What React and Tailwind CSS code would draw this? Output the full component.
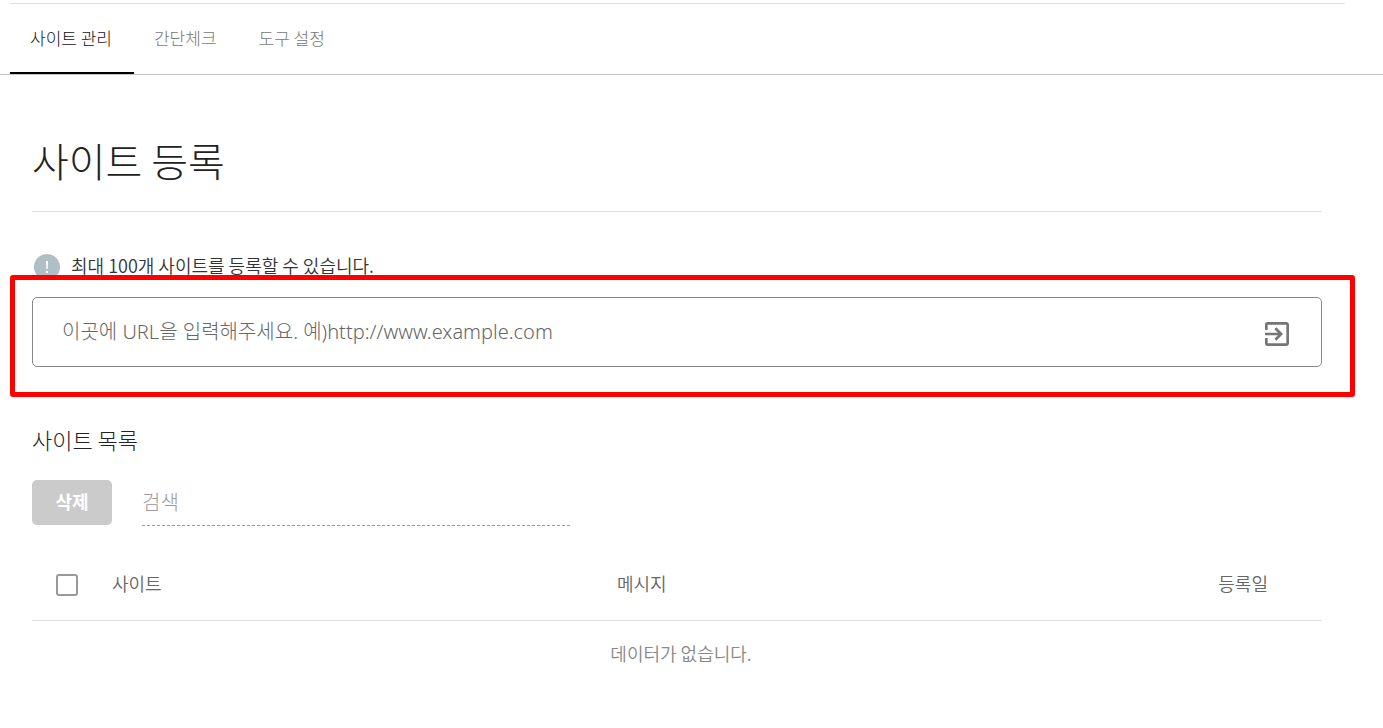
import { useState } from 'react';
import { MdExitToApp } from 'react-icons/md';

const tabs = ['사이트 관리', '간단체크', '도구 설정'];

const TabBar = ({ active, onSelect }) => (
  <nav className="border-b border-[#c4c4c4] pt-[3px] pl-[10px]">
    <div className="mr-[38px] border-t border-[#e0e0e0]" />
    <div className="flex">
      {tabs.map((tab) => (
        <button
          key={tab}
          type="button"
          onClick={() => onSelect(tab)}
          className={`h-[70px] border-b-2 pr-[22px] pl-5 text-[17px] ${
            active === tab ? 'border-black text-[#111]' : 'border-transparent text-[#777]'
          }`}
        >
          {tab}
        </button>
      ))}
    </div>
  </nav>
);

const SiteForm = () => (
  <form className="relative mt-[18px]" onSubmit={(e) => e.preventDefault()}>
    <div className="flex h-[70px] items-center rounded-[5px] border border-[#888] pr-7 pl-[29px]">
      <input
        type="text"
        aria-label="URL"
        placeholder="이곳에 URL을 입력해주세요. 예)http://www.example.com"
        className="h-full min-w-0 flex-1 pb-[2px] font-['Noto_Sans','Noto_Sans_CJK_KR',sans-serif] text-[20px] outline-none placeholder:text-[#666]"
      />
      <button type="submit" aria-label="등록" className="mt-1 text-[#757575]">
        <MdExitToApp className="size-8" />
      </button>
    </div>
    <div className="pointer-events-none absolute -top-[22px] -right-[33px] -bottom-[30px] -left-[22px] rounded-[3px] border-[5px] border-[#ff0000]" />
  </form>
);

const SiteTable = () => (
  <table className="mt-[22px] w-full table-fixed text-[18px]">
    <thead>
      <tr className="h-[72px] border-b border-[#e0e0e0] text-[#666]">
        <th className="w-20 pl-6 text-left">
          <input
            type="checkbox"
            aria-label="전체 선택"
            className="mt-[2px] block size-[22px] appearance-none rounded-[3px] border-2 border-[#999] checked:bg-[#999]"
          />
        </th>
        <th className="w-[505px] text-left font-[350]">사이트</th>
        <th className="text-left font-[350]">메시지</th>
        <th className="pr-[54px] text-right font-[350]">등록일</th>
      </tr>
    </thead>
    <tbody>
      <tr>
        <td colSpan={4} className="h-[66px] pl-2 text-center font-[350] text-[#888]">
          데이터가 없습니다.
        </td>
      </tr>
    </tbody>
  </table>
);

export default function App() {
  const [active, setActive] = useState(tabs[0]);

  return (
    <div className="bg-white font-['Noto_Sans_CJK_KR',sans-serif] font-light text-[#222]">
      <TabBar active={active} onSelect={setActive} />

      <main className="mr-[61px] ml-8 pt-[55px]">
        <h1 className="border-b border-[#e0e0e0] pb-[21px] text-[40px] leading-[60px]">사이트 등록</h1>

        <p className="mt-[40px] flex h-[27px] items-center gap-[11px] pl-[2px] text-[18px] leading-[27px] font-[350] text-[#333]">
          <svg viewBox="0 0 26 26" className="mt-[2px] size-[26px]" aria-hidden="true">
            <circle cx="13" cy="13" r="13" fill="#b0bec5" />
            <path d="M12 7h2l-.3 8h-1.4zM12 17h2v2h-2z" fill="#fff" />
          </svg>
          최대 100개 사이트를 등록할 수 있습니다.
        </p>

        <SiteForm />

        <h2 className="mt-[56px] text-[22px] leading-8">사이트 목록</h2>

        <div className="mt-[25px] flex items-start gap-[30px]">
          <button
            type="button"
            disabled
            className="h-[45px] w-20 rounded-[5px] bg-[#cbcbcb] pb-[2px] text-[18px] font-bold text-white"
          >
            삭제
          </button>
          <input
            type="search"
            aria-label="검색"
            placeholder="검색"
            className="h-[46px] w-[428px] border-b border-dashed border-[#999] pb-[3px] text-[20px] outline-none placeholder:text-[#999]"
          />
        </div>

        <SiteTable />
      </main>
    </div>
  );
}
